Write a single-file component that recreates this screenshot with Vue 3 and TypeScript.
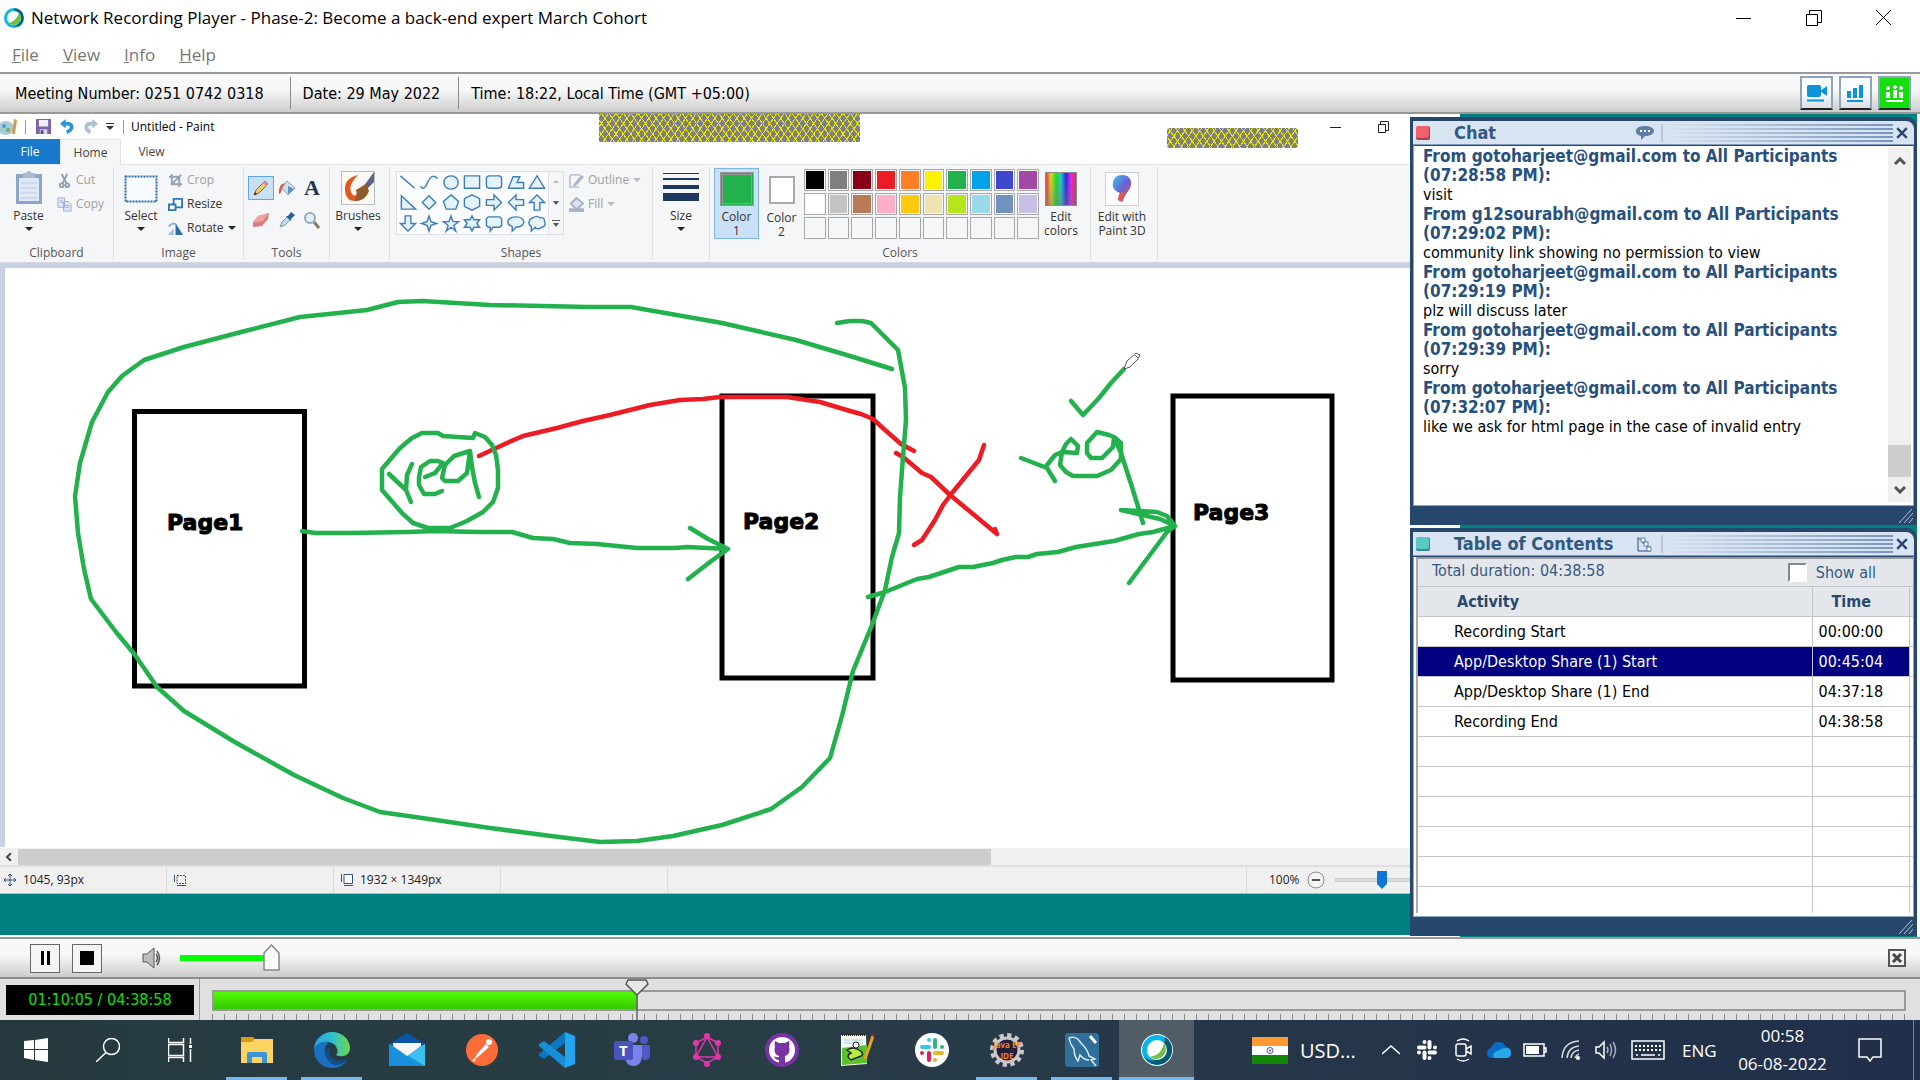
<script setup lang="ts">
import { ref } from 'vue'

interface ChatMessage { from: string; time: string; text: string }
interface TocRow { activity: string; time: string }

const messages: ChatMessage[] = [
  { from: 'gotoharjeet@gmail.com', time: '07:28:58 PM', text: 'visit' },
  { from: 'g12sourabh@gmail.com', time: '07:29:02 PM', text: 'community link showing no permission to view' },
  { from: 'gotoharjeet@gmail.com', time: '07:29:19 PM', text: 'plz will discuss later' },
  { from: 'gotoharjeet@gmail.com', time: '07:29:39 PM', text: 'sorry' },
  { from: 'gotoharjeet@gmail.com', time: '07:32:07 PM', text: 'like we ask for html page in the case of invalid entry' },
]

const rows: TocRow[] = [
  { activity: 'Recording Start', time: '00:00:00' },
  { activity: 'App/Desktop Share (1) Start', time: '00:45:04' },
  { activity: 'App/Desktop Share (1) End', time: '04:37:18' },
  { activity: 'Recording End', time: '04:38:58' },
]
const emptyRows = 6
const selected = ref(1)

const menus = ['File', 'View', 'Info', 'Help']

const palette = [
  '#000000', '#7f7f7f', '#880015', '#ed1c24', '#ff7f27', '#fff200', '#22b14c', '#00a2e8', '#3f48cc', '#a349a4',
  '#ffffff', '#c3c3c3', '#b97a57', '#ffaec9', '#ffc90e', '#efe4b0', '#b5e61d', '#99d9ea', '#7092be', '#c8bfe7',
  '', '', '', '', '', '', '', '', '', '',
]

const shapes = [
  'M2 3L17 16',
  'M1 14C4 19 7 14 9 9S15 1 19 6',
  'M10 3C20 3 20 17 10 17S0 3 10 3Z',
  'M2 3H18V16H2Z',
  'M5 3H15Q18 3 18 6V13Q18 16 15 16H5Q2 16 2 13V6Q2 3 5 3Z',
  'M2 16L7 4H14L11 10H18V16Z',
  'M10 3L18 16H2Z',
  'M3 3L18 17H3Z',
  'M10 3L17 10L10 17L3 10Z',
  'M10 2L18 9L15 17H5L2 9Z',
  'M10 2L18 6V14L10 18L2 14V6Z',
  'M2 7H10V2L18 10L10 18V13H2Z',
  'M18 7H10V2L2 10L10 18V13H18Z',
  'M7 18V10H2L10 2L18 10H13V18Z',
  'M7 2V10H2L10 18L18 10H13V2Z',
  'M10 2L12 8L18 10L12 12L10 18L8 12L2 10L8 8Z',
  'M10 2L12 8H18L13 12L15 18L10 14L5 18L7 12L2 8H8Z',
  'M10 2L12 6H18L15 10L18 14H12L10 18L8 14H2L5 10L2 6H8Z',
  'M4 3H16L18 5V12L16 14H9L6 18V14H4L2 12V5Z',
  'M10 3C21 3 21 14 10 14L6 18V13C-1 11 0 3 10 3Z',
  'M6 4Q10 1 13 4Q18 3 18 8Q20 13 15 14Q10 17 8 14L4 18V13Q0 10 2 8Q2 5 6 4Z',
]

const volume = ref(100)
const seek = ref(251)
</script>

<template>
  <div class="app">
    <header class="titlebar">
      <svg class="app-logo" viewBox="0 0 20 20"><circle cx="10" cy="10" r="10" fill="#07b9e6" /><path d="M17 3A10 10 0 0 1 3 17Q9 22 15 15Z" fill="#065a75" /><path d="M10 0A10 10 0 0 1 14 19Z" fill="#066484" /><circle cx="10" cy="10" r="7" fill="#fff" /><path d="M15 5A7 7 0 0 1 5 15Q12 13 15 5Z" fill="#6cc04a" /></svg>
      <h1>Network Recording Player - Phase-2: Become a back-end expert March Cohort</h1>
      <div class="win-controls">
        <button aria-label="Minimize"><svg viewBox="0 0 16 16"><path d="M0 8.500H15" /></svg></button>
        <button aria-label="Restore"><svg viewBox="0 0 16 16"><path d="M.5 4.500H11.500V15.500H.5ZM3.500 4V.5H15.500V12.500H12" /></svg></button>
        <button aria-label="Close"><svg viewBox="0 0 16 16"><path d="M0 0L15 15M15 0L0 15" /></svg></button>
      </div>
    </header>

    <nav class="menubar">
      <button v-for="m in menus" :key="m"><u>{{ m[0] }}</u>{{ m.slice(1) }}</button>
    </nav>

    <section class="infobar">
      <span>Meeting Number: 0251 0742 0318</span>
      <span>Date: 29 May 2022</span>
      <span>Time: 18:22, Local Time (GMT +05:00)</span>
      <div class="info-buttons">
        <button aria-label="Video"><svg viewBox="0 0 22 20"><rect x="1" y="2" width="14" height="12" rx="2" fill="#0b93dc" /><path d="M14 8L21 3V13Z" fill="#0b93dc" /><path d="M1 17.500H18" stroke="#0b93dc" stroke-width="2" /></svg></button>
        <button aria-label="Polling"><svg viewBox="0 0 22 20"><path d="M2 8H6V15H2ZM8 5H12V15H8ZM14 2H18V15H14ZM2 17H18V19H2Z" fill="#0b93dc" /></svg></button>
        <button class="on" aria-label="Participants"><svg viewBox="0 0 22 20"><path d="M2 9H6V15H2ZM9 7H13V15H9ZM15 9H19V15H15ZM2 17H19V19H2ZM2 4H6V6H2ZM3 3H5V7H3ZM9 3H13V5H9ZM10 2H12V6H10ZM15 4H19V6H15ZM16 3H18V7H16Z" fill="#fff" /></svg></button>
      </div>
    </section>

    <main class="stage">
      <section class="desktop">
        <div class="paint">
          <div class="paint-title">
            <svg class="paint-logo" viewBox="0 0 18 18"><ellipse cx="6" cy="10" rx="8" ry="7" fill="#a7cbd6" /><circle cx="4" cy="8" r="2" fill="#4c9fc7" /><circle cx="8" cy="12" r="2" fill="#6db05a" /><path d="M14 1L17 2L15 16H12Z" fill="#d79a45" /></svg>
            <i></i>
            <svg class="ic-save" viewBox="0 0 16 16"><path d="M0 0H16V16H0Z" fill="#7c63a8" /><path d="M3 1H13V8H3Z" fill="#f1eef7" /><path d="M4 11H12V16H4Z" fill="#ddd5ea" /><path d="M5 12H8V16H5Z" fill="#5b4586" /></svg>
            <svg class="ic-undo" viewBox="0 0 16 16"><path d="M4 5H8C14 5 14 12 7 14" fill="none" stroke="#2f93d8" stroke-width="4" /><path d="M0 5L6 0V10Z" fill="#2f93d8" /></svg>
            <svg class="ic-undo" viewBox="0 0 16 16"><path d="M12 5H8C2 5 2 12 8 14" fill="none" stroke="#adbfd3" stroke-width="4" /><path d="M16 5L10 0V10Z" fill="#adbfd3" /></svg>
            <svg class="ic-more" viewBox="0 0 8 8"><path d="M0 0H8V1H0ZM0 3H8L4 7Z" fill="#333" /></svg>
            <i></i>
            <span>Untitled - Paint</span>
            <div class="paint-win"><svg viewBox="0 0 60 14"><path d="M0 7.500H11" /><path d="M48.500 4.500H55.500V12.500H48.500ZM50.500 4V1.500H58.500V10.500H56" /></svg></div>
            <div class="hatch hatch-a"></div>
            <div class="hatch hatch-b"></div>
          </div>

          <div class="tabs">
            <button class="tab file">File</button>
            <button class="tab home">Home</button>
            <button class="tab view">View</button>
          </div>

          <div class="ribbon">
            <div class="group g-clip">
              <div class="body">
                <button class="big">
                  <svg class="big-ic" viewBox="0 0 34 34"><path d="M4 3H30V33H4Z" fill="#8ea4c6" /><path d="M7 7H27V30H7Z" fill="#dfe9f6" /><path d="M9 12H25M9 17H25M9 22H25M9 27H25" stroke="#b9cbe4" /><path d="M11 2H14Q17-2 20 2H23V7H11Z" fill="#a9b9d2" /></svg>
                  Paste<b></b>
                </button>
                <div class="smalls faded">
                  <button><svg viewBox="0 0 16 16"><path d="M5 1L10 11M11 1L6 11" stroke="#8f9cb5" stroke-width="2" /><circle cx="5" cy="13" r="2" fill="none" stroke="#8f9cb5" stroke-width="2" /><circle cx="11" cy="13" r="2" fill="none" stroke="#8f9cb5" stroke-width="2" /></svg>Cut</button>
                  <button><svg viewBox="0 0 16 16"><path d="M1 1H8V11H1ZM7 5H12L15 8V15H7Z" fill="#e2eaf5" stroke="#98acd0" /><path d="M3 4H6M3 6H6M9 9H13M9 11H13" stroke="#98acd0" /></svg>Copy</button>
                </div>
              </div>
              <p>Clipboard</p>
            </div>

            <div class="group g-image">
              <div class="body">
                <button class="big">
                  <svg class="big-ic" viewBox="0 0 34 34"><rect x="1.500" y="5.500" width="31" height="25" fill="#f6fafd" stroke="#2d6da8" stroke-width="2" stroke-dasharray="2 1" /></svg>
                  Select<b></b>
                </button>
                <div class="smalls">
                  <button class="faded"><svg viewBox="0 0 16 16"><path d="M4 1V12H15M1 4H12V15M5 11L14 2" fill="none" stroke="#93a1b8" stroke-width="2" /></svg>Crop</button>
                  <button><svg viewBox="0 0 16 16"><path d="M6 2H15V11H6Z" fill="#f2f8fc" stroke="#3477b5" stroke-width="2" /><path d="M1 8H8V14H1Z" fill="#fff" stroke="#3477b5" stroke-width="2" /></svg>Resize</button>
                  <button><svg viewBox="0 0 16 16"><path d="M8 15V2L16 15Z" fill="#2f6ea5" /><path d="M0 15L6 8V15Z" fill="#9fc0dc" /><path d="M1 6Q3 2 8 3" fill="none" stroke="#7fb0d8" stroke-width="2" /></svg>Rotate<b></b></button>
                </div>
              </div>
              <p>Image</p>
            </div>

            <div class="group g-tools">
              <div class="body">
                <div class="tools">
                  <button class="active" aria-label="Pencil"><svg viewBox="0 0 18 18"><path d="M2 16L4 11L13 2L16 5L7 14Z" fill="#efc96c" stroke="#8a6a3a" /><path d="M13 2L16 5L14 7L11 4Z" fill="#d98e88" /><path d="M2 16L3 13L5 15Z" fill="#222" /></svg></button>
                  <button aria-label="Fill"><svg viewBox="0 0 18 18"><path d="M9 2L17 9L10 16L4 9Z" fill="#cfe0f0" stroke="#7d9fc0" /><path d="M10 7L16 10L10 15Z" fill="#5d8fc0" /><path d="M7 4Q0 5 1 15Q4 14 4 9Z" fill="#d9603a" /></svg></button>
                  <button class="letter" aria-label="Text">A</button>
                  <button aria-label="Eraser"><svg viewBox="0 0 18 18"><path d="M6 5L17 2L16 8L10 15L1 16L1 11Z" fill="#dd7a80" /><path d="M6 5L17 2L11 10L1 12Z" fill="#efa4a6" /></svg></button>
                  <button aria-label="Color picker"><svg viewBox="0 0 18 18"><path d="M2 16L4 11L9 6L12 9L7 14Z" fill="#c3d9ec" stroke="#6f9cc0" /><path d="M8 5L10 5L13 1L17 4L13 8V10Z" fill="#22619e" /></svg></button>
                  <button aria-label="Magnifier"><svg viewBox="0 0 18 18"><path d="M11 11L16 17" stroke="#8a7a66" stroke-width="3" /><circle cx="7" cy="7" r="5" fill="#e4eff8" stroke="#98a8ba" stroke-width="2" /></svg></button>
                </div>
              </div>
              <p>Tools</p>
            </div>

            <div class="group g-brush">
              <div class="body">
                <button class="big">
                  <svg class="big-ic" viewBox="0 0 34 34"><rect x=".5" y=".5" width="33" height="33" fill="#fbf7f3" stroke="#b9bdc4" /><path d="M17 4Q3 7 4 20Q5 31 16 30Q23 28 22 22L17 21Q15 27 11 23Q6 15 17 4Z" fill="#dd5a20" /><path d="M33 1L22 16L25 19L33 11Z" fill="#5d6584" /><path d="M25 13L15 19Q17 26 13 30Q25 30 28 20Z" fill="#8e5b2c" /></svg>
                  Brushes<b></b>
                </button>
              </div>
            </div>

            <div class="group g-shapes">
              <div class="body">
                <div class="gallery">
                  <div class="shape-grid">
                    <svg v-for="(d, i) in shapes" :key="i" viewBox="0 0 20 20"><path :d="d" :fill="i < 2 ? 'none' : '#e4f2fa'" stroke="#3f7fb8" stroke-width="1.500" /></svg>
                  </div>
                  <div class="gallery-nav">
                    <svg viewBox="0 0 8 8"><path d="M1 5L4 2L7 5Z" fill="#bbb" /></svg>
                    <svg viewBox="0 0 8 8"><path d="M1 2H7L4 6Z" fill="#555" /></svg>
                    <svg viewBox="0 0 8 8"><path d="M0 0H8V1H0ZM1 3H7L4 7Z" fill="#555" /></svg>
                  </div>
                </div>
                <div class="smalls faded">
                  <button><svg viewBox="0 0 16 16"><path d="M1 2H12M1 2V15H11" fill="none" stroke="#c0c7d6" stroke-width="2" /><path d="M4 13L13 2L16 4L7 14Z" fill="#a8b4cc" /></svg>Outline<b></b></button>
                  <button><svg viewBox="0 0 16 16"><path d="M0 12H16V16H0Z" fill="#a8b3cc" /><path d="M8 1L15 7L8 13L2 7Z" fill="#dbe3f0" stroke="#a3b1cc" stroke-width="2" /></svg>Fill<b></b></button>
                </div>
              </div>
              <p>Shapes</p>
            </div>

            <div class="group g-size">
              <div class="body">
                <button class="big">
                  <svg class="big-ic wide" viewBox="0 0 36 34"><path d="M0 2H36V3H0ZM0 7H36V9H0ZM0 14H36V18H0ZM0 22H36V30H0Z" fill="#1b365f" /></svg>
                  Size<b></b>
                </button>
              </div>
            </div>

            <div class="group g-colors">
              <div class="body">
                <button class="color current"><span class="swatch green"></span>Color<br />1</button>
                <button class="color"><span class="swatch white"></span>Color<br />2</button>
                <div class="palette">
                  <button v-for="(c, i) in palette" :key="i" :aria-label="'Color ' + (i + 1)" :style="{ background: c || '#f5f6f7' }"></button>
                </div>
                <button class="color edit"><span class="swatch rainbow"></span>Edit<br />colors</button>
              </div>
              <p>Colors</p>
            </div>

            <div class="group g-3d">
              <div class="body">
                <button class="color edit">
                  <svg class="swatch" viewBox="0 0 34 34"><defs><linearGradient id="drop" x1="0" y1="0" x2="1" y2="1"><stop offset="0" stop-color="#36c5ea" /><stop offset=".5" stop-color="#6a63d8" /><stop offset="1" stop-color="#e8443c" /></linearGradient></defs><rect x=".5" y=".5" width="33" height="33" fill="#fdfdfe" stroke="#cdd1d6" /><path d="M17 3C24 3 27 8 26 13C25 19 20 21 18 29Q14 30 13 27L15 21C10 19 7 16 8 11Q9 3 17 3Z" fill="url(#drop)" /><path d="M14 22L21 18Q17 24 17 30L13 28Z" fill="#e9573f" /></svg>
                  Edit with<br />Paint 3D
                </button>
              </div>
            </div>
          </div>

          <div class="canvas">
            <svg viewBox="5 268 1405 579" preserveAspectRatio="xMinYMin meet">
              <g fill="none" stroke="#000" stroke-width="5">
                <path d="M134.500 411.500H304.500V686H134.500Z" /><path d="M722 396H873V678H722Z" /><path d="M1173 396H1332V680H1173Z" />
              </g>
              <g class="page-label">
                <text x="167" y="530">Page1</text><text x="743" y="529">Page2</text><text x="1193" y="520">Page3</text>
              </g>
              <g fill="none" stroke="#ed1c24" stroke-width="4.500" stroke-linecap="round" stroke-linejoin="round">
                <path d="M479 456L507 443L523 436L557 428L583 421L610 415L650 405L680 400L703 399L720 397H787L820 402L850 411L861 414L873 419L885 430L901 444L914 451" />
                <path d="M896 453L903 457L922 473L931 477L950 495L973 514L997 534L995 529" /><path d="M984 445L979 460L952 493L943 505L935 520L922 540L914 545" />
              </g>
              <g fill="none" stroke="#22b14c" stroke-width="4.500" stroke-linecap="round" stroke-linejoin="round">
                <path d="M892 369L850 356L796 340L722 323L631 307L588 307L490 305L422 301L398 302L367 310L300 317L245 331L184 347L144 360L122 376L108 392L92 422L80 463L75 496L78 533L84 569L91 599L116 632L135 655L157 687L184 711L233 741L294 775L343 798L380 812L429 819L490 828L551 836L600 842L637 841L673 836L722 825L771 809L802 787L830 758L842 716L853 671L872 625L885 590L892 557L899 533L900 497L903 457L906 420L905 388L898 350L885 337L871 323L862 321H850L837 323" />
                <path d="M422 433H438L443 436L473 438L475 433L485 437L492 445L496 455L498 470V488L493 502L483 512L467 521L450 528H428L413 523L402 513L382 490V469L400 448L412 438Z" />
                <path d="M389 474L406 490L411 502M412 464L407 475L406 490M425 477L435 473L443 463L438 461H430L421 467L419 477V485L424 494H435L442 491M470 451L454 456L445 465L442 478L445 481H458L467 473L470 451L472 467L475 483L479 497" />
                <path d="M302 531L315 533H350L408 532L435 531L477 532H512L533 538L553 539L570 543L597 544L637 548H675L687 547L728 549M690 528L708 539L728 549L710 562L688 579" />
                <path d="M868 597L885 592L917 579L929 577L959 567H973L993 563L1002 560L1016 557H1028L1037 554L1058 552L1076 547L1114 541L1139 534L1153 532L1175 526M1121 510L1157 512L1167 516L1175 526L1160 519L1121 510M1175 526L1167 532L1129 583" />
                <path d="M1071 401L1083 415L1099 398L1111 383L1124 369" />
                <path d="M1021 458L1047 468L1055 481M1047 465L1055 455L1062 452L1077 453L1078 446L1071 439L1066 444L1062 452L1060 465L1066 472L1073 476H1097L1111 470L1121 459V443L1114 437L1109 435L1097 432L1087 443V453L1091 458H1102L1113 447L1114 437L1121 453L1132 487L1143 523" />
              </g>
              <path d="M1124 369L1127 361L1136 353L1140 355L1138 359L1130 367ZM1135 355L1138 358" fill="#fff" stroke="#555" />
            </svg>
          </div>

          <div class="hscroll"><svg viewBox="0 0 8 8"><path d="M6 0L2 4L6 8" fill="none" stroke="#444" stroke-width="2" /></svg><div class="hthumb"></div></div>

          <div class="status">
            <span><svg viewBox="0 0 14 14"><path d="M7 1V13M1 7H13M5 3L7 1L9 3M5 11L7 13L9 11M3 5L1 7L3 9M11 5L13 7L11 9" fill="none" stroke="#34507c" /></svg>1045, 93px</span>
            <span><svg viewBox="0 0 14 14"><path d="M4 2.500H12.500V10.500H4Z" fill="none" stroke="#34507c" stroke-dasharray="2 1" /><path d="M1.500 2V9M4 12.500H13" stroke="#34507c" /></svg></span>
            <span><svg viewBox="0 0 14 14"><path d="M4 1.500H12.500V10.500H4Z" fill="#fff" stroke="#34507c" /><path d="M1.500 1V9M4 12.500H13" stroke="#34507c" /></svg>1932 × 1349px</span>
            <span></span>
            <span class="grow"></span>
            <div class="zoom">100%<svg viewBox="0 0 18 18"><circle cx="9" cy="9" r="8" fill="#f5f5f5" stroke="#888" /><path d="M5 9H13" stroke="#555" stroke-width="2" /></svg><div class="zoom-track"><svg viewBox="0 0 10 18"><path d="M0 0H10V13L5 18L0 13Z" fill="#0b78d7" /></svg></div></div>
          </div>
        </div>
        <div class="wallpaper"></div>
      </section>

      <aside class="panels">
        <section class="panel">
          <header class="panel-head">
            <i class="led red"></i><h2>Chat</h2>
            <svg class="bubble" viewBox="0 0 20 16"><path d="M10 1C22 1 22 11 10 11L6 15V11C-2 9-1 1 10 1Z" fill="#5d7fa6" /><path d="M5 6H7M9 6H11M13 6H15" stroke="#fff" stroke-width="2" /></svg>
            <div class="grip"></div>
            <button aria-label="Close chat"><svg viewBox="0 0 10 10"><path d="M1 1L9 9M9 1L1 9" stroke="#27486c" stroke-width="2" /></svg></button>
          </header>
          <div class="panel-body chat">
            <div class="log">
              <div v-for="(m, i) in messages" :key="i" class="msg">
                <h3>From {{ m.from }} to All Participants ({{ m.time }}):</h3>
                <p>{{ m.text }}</p>
              </div>
            </div>
            <div class="vscroll">
              <svg viewBox="0 0 12 8"><path d="M1 7L6 2L11 7" /></svg>
              <div class="vthumb"></div>
              <svg viewBox="0 0 12 8"><path d="M1 1L6 6L11 1" /></svg>
            </div>
          </div>
          <footer><svg viewBox="0 0 14 14"><path d="M0 14L13 0M5 14L14 4M10 14L14 9" /></svg></footer>
        </section>

        <section class="panel">
          <header class="panel-head">
            <i class="led teal"></i><h2>Table of Contents</h2>
            <svg class="tree" viewBox="0 0 16 16"><path d="M2 1V15M2 15H15M2 3H7M7 3V7H11V11H14V14" fill="none" stroke="#5d7fa6" stroke-width="1.500" /><path d="M5 2H9V6H5ZM8 6H12V10H8ZM11 11H15V15H11Z" fill="#fff" stroke="#5d7fa6" /></svg>
            <div class="grip"></div>
            <button aria-label="Close contents"><svg viewBox="0 0 10 10"><path d="M1 1L9 9M9 1L1 9" stroke="#27486c" stroke-width="2" /></svg></button>
          </header>
          <div class="panel-body toc">
            <div class="summary">
              <span>Total duration: 04:38:58</span>
              <label for="show-all"><input id="show-all" type="checkbox" />Show all</label>
            </div>
            <table>
              <colgroup><col /><col class="c-time" /><col class="c-end" /></colgroup>
              <thead><tr><th>Activity</th><th class="time">Time</th><th></th></tr></thead>
              <tbody>
                <tr v-for="(r, i) in rows" :key="i" :class="{ selected: selected === i }" @click="selected = i"><td>{{ r.activity }}</td><td>{{ r.time }}</td><td></td></tr>
                <tr v-for="n in emptyRows" :key="'e' + n"><td></td><td></td><td></td></tr>
              </tbody>
            </table>
          </div>
          <footer><svg viewBox="0 0 14 14"><path d="M0 14L13 0M5 14L14 4M10 14L14 9" /></svg></footer>
        </section>
      </aside>
    </main>

    <section class="controls">
      <button class="ctl" aria-label="Pause"><svg viewBox="0 0 14 14"><path d="M3 0H6V14H3ZM9 0H12V14H9Z" /></svg></button>
      <button class="ctl" aria-label="Stop"><svg viewBox="0 0 14 14"><path d="M0 0H14V14H0Z" /></svg></button>
      <svg class="speaker" viewBox="0 0 22 22"><path d="M1 7H5L12 1V21L5 15H1Z" fill="#bdbdbd" stroke="#555" /><path d="M14 7Q17 11 14 15M15 4Q20 11 15 18" fill="none" stroke="#555" stroke-width="1.500" /></svg>
      <input v-model="volume" class="volume" type="range" min="0" max="100" aria-label="Volume" />
      <button class="hide" aria-label="Hide controls"><svg viewBox="0 0 18 18"><path d="M1 1H17V17H1Z" fill="#f2f2f2" stroke="#555" stroke-width="2" /><path d="M5 5L13 13M13 5L5 13" stroke="#444" stroke-width="3" /></svg></button>
    </section>

    <section class="timeline">
      <div class="clock-box">01:10:05 / 04:38:58</div>
      <div class="seek">
        <div class="seek-track"><div class="seek-fill" :style="{ width: seek / 10 + '%' }"></div></div>
        <div class="ticks"></div>
        <input v-model="seek" type="range" min="0" max="1000" aria-label="Seek" />
      </div>
    </section>

    <footer class="taskbar">
      <button class="sys" aria-label="Start"><svg viewBox="0 0 24 24"><path d="M0 3L10 2V11H0ZM11 2L24 0V11H11ZM0 12H10V22L0 20ZM11 12H24V24L11 22Z" fill="#fff" /></svg></button>
      <button class="sys" aria-label="Search"><svg viewBox="0 0 24 24"><circle cx="15.500" cy="8.500" r="8" fill="none" stroke="#fff" stroke-width="1.500" /><path d="M10 14.500L0 24" stroke="#fff" stroke-width="1.500" /></svg></button>
      <button class="sys" aria-label="Task view"><svg viewBox="0 0 24 24"><path d="M.5 0V4.500H15.500V0M.5 6.500H15.500V17.500H.5ZM.5 24V19.500H15.500V24M22.500 0V6M22.500 11V24" fill="none" stroke="#fff" stroke-width="1.500" /><path d="M21 7H24V10H21Z" fill="#fff" /></svg></button>
      <div class="apps">
        <button class="open" aria-label="File Explorer"><svg viewBox="0 0 36 36"><path d="M2 5H14L17 8V14H2Z" fill="#d99a10" /><path d="M2 10H13L16 7H34V31H2Z" fill="#fcd462" /><path d="M8 31V22Q8 20 10 20H26Q28 20 28 22V31H23V25H13V31Z" fill="#3b93d8" /></svg></button>
        <button class="open" aria-label="Edge"><svg viewBox="0 0 36 36"><defs><linearGradient id="eg" x1="0" y1="0" x2="1" y2="0"><stop offset="0" stop-color="#27a3e2" /><stop offset=".5" stop-color="#2cc0d0" /><stop offset="1" stop-color="#6fd64a" /></linearGradient></defs><path d="M0 18C0 7 9 0 18 0C29 0 36 8 36 16C36 24 27 26 22 23C25 21 24 12 15 10C8 9 2 12 0 18Z" fill="url(#eg)" /><path d="M0 18C2 12 8 9 15 10C10 14 9 22 15 29C20 34 27 33 33 28C29 34 24 36 18 36C8 36 0 28 0 18Z" fill="#1b6fc0" /><path d="M15 14C11 19 11 26 17 31C23 35 30 32 33 27C27 30 18 29 15 22Z" fill="#124d8c" /></svg></button>
        <button aria-label="Mail"><svg viewBox="0 0 36 36"><path d="M0 12L18 1L36 12V18H0Z" fill="#0a55a8" /><path d="M0 12L18 23L36 12V34H0Z" fill="#3cc0f0" /><path d="M0 12L36 34H0Z" fill="#1a90dc" /><path d="M4 11H32V14L18 24L4 14Z" fill="#f7f7f7" /></svg></button>
        <button aria-label="Postman"><svg viewBox="0 0 36 36"><circle cx="18" cy="18" r="16" fill="#ff6c37" /><circle cx="25" cy="10" r="3" fill="#fff" /><path d="M22 12L25 15L15 24L10 28L13 22Z" fill="#fff" /><path d="M11 27L9 29" stroke="#fff" stroke-width="2" /></svg></button>
        <button aria-label="Visual Studio Code"><svg viewBox="0 0 36 36"><path d="M26 0L36 4V32L26 36L21 31L26 27V9L21 5Z" fill="#23a5f1" /><path d="M26 0V11L5 27L0 24V22Z" fill="#0b77c2" /><path d="M26 36V25L5 9L0 12V14Z" fill="#178fd8" /></svg></button>
        <button aria-label="Teams"><svg viewBox="0 0 36 36"><circle cx="30" cy="8" r="4" fill="#5059c9" /><circle cx="19" cy="6" r="5" fill="#7b83eb" /><path d="M26 13H36V24Q35 29 29 28Z" fill="#5059c9" /><path d="M11 13H28V25Q27 34 19 34Q12 33 11 26Z" fill="#7b83eb" /><rect x="0" y="9" width="19" height="19" rx="2" fill="#4b53bc" /><text x="5" y="24" fill="#fff" font-size="15" font-weight="700">T</text></svg></button>
        <button aria-label="GraphQL"><svg viewBox="0 0 36 36"><path d="M18 5L29 11V25L18 31L7 25V11ZM18 5L29 25H7Z" fill="none" stroke="#e535ab" stroke-width="1.500" /><g fill="#e535ab"><circle cx="18" cy="4" r="3" /><circle cx="29" cy="11" r="3" /><circle cx="29" cy="25" r="3" /><circle cx="18" cy="32" r="3" /><circle cx="7" cy="25" r="3" /><circle cx="7" cy="11" r="3" /></g></svg></button>
        <button aria-label="GitHub Desktop"><svg viewBox="0 0 36 36"><circle cx="18" cy="18" r="17" fill="#7a33a6" /><circle cx="18" cy="18" r="13" fill="#fff" /><path d="M11 9L15 11H21L25 9Q26 12 25 14Q27 22 21 24V31H15V28Q11 28 10 24Q13 26 15 25V24Q9 22 11 14Q10 12 11 9Z" fill="#7a33a6" /></svg></button>
        <button aria-label="Notepad++"><svg viewBox="0 0 36 36"><path d="M2 3H27L28 32L2 34Z" fill="#f5f8f0" /><path d="M3 16L28 13V31L3 33Z" fill="#59c22c" /><path d="M3 3H27" stroke="#222" stroke-width="2" stroke-dasharray="1 1" /><path d="M5 8H24M5 11H24" stroke="#a9cce6" /><path d="M8 18Q14 14 20 18T22 24L12 28Q6 24 12 21Z" fill="#b9ef3c" stroke="#223" stroke-width="1.500" /><circle cx="17" cy="13" r="3" fill="#fff" stroke="#222" /><path d="M26 27L34 4" stroke="#e8a21c" stroke-width="3" /><path d="M34 2L35 5" stroke="#9a2c20" stroke-width="2" /></svg></button>
        <button aria-label="Slack"><svg viewBox="0 0 36 36"><circle cx="18" cy="18" r="17" fill="#fff" /><g fill="none" stroke-width="4" stroke-linecap="round"><path d="M15 8V8.100M8 15H15" stroke="#36c5f0" /><path d="M21 8V15M28 15V15.100" stroke="#2eb67d" /><path d="M21 21H28M21 28V28.100" stroke="#ecb22e" /><path d="M15 21V28M8 21V21.100" stroke="#e01e5a" /></g></svg></button>
        <button class="open" aria-label="Java EE IDE"><svg viewBox="0 0 36 36"><circle cx="18" cy="18" r="14" fill="none" stroke="#c9c9c9" stroke-width="6" stroke-dasharray="4 3.300" /><circle cx="18" cy="18" r="12" fill="#241f38" stroke="#c9c9c9" stroke-width="3" /><text x="18" y="16" fill="#f58220" font-size="8" font-weight="700" text-anchor="middle">Java EE</text><text x="18" y="27" fill="#f58220" font-size="8" font-weight="700" text-anchor="middle">IDE</text></svg></button>
        <button class="open" aria-label="MySQL Workbench"><svg viewBox="0 0 36 36"><rect x="1" y="1" width="34" height="34" rx="3" fill="#2f6f99" /><path d="M5 6Q12 3 17 11Q24 18 25 24L31 27L27 28L32 34M5 6Q6 12 10 17Q10 24 14 29L16 23Q20 28 25 28" fill="none" stroke="#dce9f2" stroke-width="1.500" /><path d="M26 4L32 11" stroke="#fff" stroke-width="3" /></svg></button>
        <button class="open current" aria-label="Webex"><svg viewBox="0 0 36 36"><circle cx="18" cy="18" r="16" fill="#fff" /><circle cx="18" cy="18" r="15" fill="#08b7e8" /><path d="M26 5A15 15 0 1 1 5 25Q18 34 24 20Z" fill="#055a78" /><circle cx="18" cy="18" r="10" fill="#fff" /><path d="M25 11A10 10 0 0 1 11 25Q23 23 25 11Z" fill="#6cc04a" /></svg></button>
      </div>

      <div class="tray">
        <svg class="flag" viewBox="0 0 36 27"><path d="M0 0H36V9H0Z" fill="#ff9933" /><path d="M0 9H36V18H0Z" fill="#fff" /><path d="M0 18H36V27H0Z" fill="#138808" /><circle cx="18" cy="13.500" r="3" fill="none" stroke="#4a4ab0" /><circle cx="18" cy="13.500" r="1" fill="#4a4ab0" /></svg>
        <span class="rate">USD...</span>
        <svg class="t-chev" viewBox="0 0 18 10"><path d="M0 9L9 1L18 9" fill="none" stroke="#fff" stroke-width="1.500" /></svg>
        <svg class="t-24" viewBox="0 0 24 24"><g fill="none" stroke="#fff" stroke-width="4" stroke-linecap="round"><path d="M9.500 4V4.100M4 9.500H9.500M14.500 4V9.500M20 9.500V9.600M14.500 14.500H20M14.500 20V20.100M9.500 14.500V20M4 14.500V14.600" /></g></svg>
        <svg class="t-24" viewBox="0 0 24 24"><path d="M5 8Q5 6 7 6H13Q15 6 15 8V16Q15 18 13 18H7Q5 18 5 16ZM15 11L20 8V16L15 13M6 3Q12-1 18 3M6 21Q12 25 18 21" fill="none" stroke="#fff" stroke-width="1.500" /></svg>
        <svg class="t-24" viewBox="0 0 24 24"><path d="M5 20Q0 20 0 15Q0 11 4 10Q6 4 12 4Q17 4 19 9Q24 10 24 15Q24 20 19 20Z" fill="#0a6cc7" /><path d="M8 20Q4 18 8 14L17 10Q24 9 24 15Q24 20 19 20Z" fill="#28a8ea" /></svg>
        <svg class="t-24" viewBox="0 0 24 24"><path d="M1 6H21V18H1ZM21 10H23V14H21" fill="none" stroke="#fff" stroke-width="1.500" /><path d="M3 8H16V16H3Z" fill="#fff" /></svg>
        <svg class="t-24" viewBox="0 0 24 24"><path d="M3 20Q4 4 20 3M8 20Q9 9 20 8M12 20Q13 13 20 12M16 20Q17 17 20 16" fill="none" stroke="#d5dade" stroke-width="1.500" /><circle cx="19" cy="20" r="2" fill="#fff" /></svg>
        <svg class="t-24" viewBox="0 0 24 24"><path d="M1 9H4L9 4V20L4 15H1Z" fill="none" stroke="#fff" stroke-width="1.500" /><path d="M12 9Q14 12 12 15M15 6Q18 12 15 18M18 4Q23 12 18 20" fill="none" stroke="#a5afba" stroke-width="1.500" /></svg>
        <svg class="t-kbd" viewBox="0 0 34 20"><path d="M1 1H33V19H1Z" fill="none" stroke="#fff" stroke-width="1.500" /><path d="M4 6H30M4 10H30" stroke="#fff" stroke-width="2" stroke-dasharray="2 2" /><path d="M5 15H7M10 15H24M27 15H29" stroke="#fff" stroke-width="1.500" /></svg>
        <span class="lang">ENG</span>
        <div class="clock"><span>00:58</span><span>06-08-2022</span></div>
        <svg class="t-note" viewBox="0 0 24 24"><path d="M1 1H23V19H15L12 23L9 19H1Z" fill="none" stroke="#fff" stroke-width="1.500" /></svg>
        <i class="peek"></i>
      </div>
    </footer>
  </div>
</template>

<style>
body { margin: 0; }
</style>

<style scoped>
* { box-sizing: border-box; }
.app { display: flex; flex-direction: column; min-height: 100vh; background: #fff; color: #000; font-family: "Open Sans", "Noto Sans", sans-serif; overflow: hidden; }
button { padding: 0; border: 0; background: none; color: inherit; font: inherit; }
h1, h2, h3, p { margin: 0; font-weight: 400; }
svg { flex: none; display: block; }

.titlebar { display: flex; align-items: center; height: 36px; padding-left: 4px; }
.app-logo { width: 20px; height: 20px; margin-right: 7px; }
.titlebar h1 { font-size: 17px; line-height: 24px; white-space: nowrap; }
.win-controls { display: flex; margin-left: auto; padding-right: 1px; }
.win-controls button { display: grid; place-items: center; width: 70px; height: 34px; }
.win-controls svg { width: 16px; height: 16px; fill: none; stroke: #000; }

.menubar { display: flex; gap: 24px; height: 36px; padding-left: 12px; color: #777; font-size: 17px; }

.infobar { display: flex; align-items: center; height: 42px; border-top: 2px solid #999; border-bottom: 2px solid #999; background: linear-gradient(#f8f8f8 40%, #cdcdcd); font-family: "DejaVu Sans Condensed", "DejaVu Sans", sans-serif; font-size: 16px; }
.infobar > span { height: 32px; padding: 0 26px 0 12px; line-height: 34px; border-right: 1px solid #8c8c8c; white-space: nowrap; }
.infobar > span:first-child { padding-left: 15px; }
.infobar > span + span { padding-right: 18px; }
.infobar > span:nth-child(3) { border: 0; }
.info-buttons { display: flex; gap: 6px; margin-left: auto; padding-right: 9px; }
.info-buttons button { display: grid; place-items: center; width: 33px; height: 34px; border: 2px solid #8ea3bc; border-bottom: 2px solid #222; background: linear-gradient(#fafbff 50%, #dcdde4); }
.info-buttons .on { background: #14de0b; }
.info-buttons svg { width: 22px; height: 20px; }

.stage { display: flex; flex: 1; }
.desktop { display: flex; flex: 1; flex-direction: column; min-width: 0; padding-bottom: 2px; overflow: hidden; }
.wallpaper { height: 42px; border-top: 1px solid #8cc; background: #008080; }
.paint { display: flex; flex: 1; flex-direction: column; color: #333; font-size: 12px; line-height: 14px; }

.paint-title { position: relative; display: flex; align-items: center; height: 25px; }
.paint-title i { width: 1px; height: 14px; background: #999; }
.paint-logo { width: 18px; height: 18px; margin-right: 7px; }
.ic-save { width: 15px; height: 15px; margin: 0 9px 0 10px; }
.ic-undo { width: 15px; height: 15px; margin-right: 8px; }
.ic-more { width: 8px; height: 8px; margin-right: 9px; }
.paint-title span { margin-left: 7px; color: #000; }
.paint-win { margin-left: auto; padding-right: 20px; }
.paint-win svg { width: 60px; height: 14px; fill: none; stroke: #222; stroke-width: 1px; }
.hatch { position: absolute; background-color: #807f80; background-image: repeating-linear-gradient(55deg, #e8e800 0 1px, transparent 1px 6px), repeating-linear-gradient(-55deg, #e8e800 0 1px, transparent 1px 6px); }
.hatch-a { top: 0; left: 599px; width: 261px; height: 28px; }
.hatch-b { top: 14px; left: 1167px; width: 131px; height: 20px; border-radius: 3px; }

.tabs { display: flex; height: 26px; border-bottom: 1px solid #e1e3e6; }
.tab { width: 61px; height: 25px; color: #444; }
.tab.file { width: 60px; background: #1979ca; color: #fff; }
.tab.home { height: 26px; border: 1px solid #e1e3e6; border-bottom: 0; background: #f5f6f7; }

.ribbon { display: flex; height: 98px; padding-top: 2px; border-bottom: 1px solid #d5d8dc; background: #f5f6f7; }
.group { display: flex; flex: none; flex-direction: column; height: 93px; border-right: 1px solid #e0e2e5; }
.group .body { display: flex; flex: 1; min-height: 0; padding-top: 4px; }
.group p { height: 14px; color: #555; text-align: center; }
.g-clip { width: 114px; }
.g-image { width: 130px; }
.g-tools { width: 86px; }
.g-brush { width: 60px; }
.g-shapes { width: 263px; }
.g-size { width: 57px; }
.g-colors { width: 381px; }
.g-3d { width: 67px; }
.big { display: flex; flex-direction: column; align-items: center; width: 58px; height: 66px; }
.g-clip .big { width: 57px; }
.g-image .big { width: 54px; }
.big-ic { width: 34px; height: 34px; margin-bottom: 4px; }
.big-ic.wide { width: 36px; }
.group b { border: 4px solid transparent; border-top-color: #222; border-bottom: 0; }
.big b { margin-top: 4px; }
.g-brush .big, .g-size .big { width: 56px; }
.smalls { display: flex; flex-direction: column; margin-top: -3px; }
.smalls button { display: flex; align-items: center; gap: 4px; height: 24px; }
.smalls svg { width: 15px; height: 15px; }
.faded { color: #a0a0a0; }
.smalls.faded b { border-top-color: #bbb; }
.tools { display: grid; grid-template-columns: 26px 26px 24px; grid-template-rows: 24px 24px; row-gap: 8px; padding: 5px 0 0 4px; }
.tools button { display: grid; place-items: center; }
.tools svg { width: 18px; height: 18px; }
.tools .active { border: 1px solid #5fa8e8; background: #c9e0f7; }
.tools .letter { color: #1f3557; font: 700 22px/24px "Liberation Serif", serif; }
.gallery { display: flex; width: 168px; height: 64px; margin: 0 5px 0 6px; border: 1px solid #dcdfe3; background: #fbfcfd; }
.shape-grid { display: grid; flex: 1; grid-template-columns: repeat(7, 1fr); grid-template-rows: repeat(3, 1fr); place-items: center; }
.shape-grid svg { width: 20px; height: 19px; }
.gallery-nav { display: flex; flex-direction: column; align-items: center; justify-content: space-around; width: 15px; border-left: 1px solid #e1e3e6; background: #f5f6f7; }
.gallery-nav svg { width: 8px; height: 8px; }
.color { width: 45px; height: 71px; margin-top: -3px; text-align: center; }
.color.current { margin-left: 4px; border: 1px solid #7eb4ea; background: #c9e0f7; }
.swatch { display: block; width: 34px; height: 34px; margin: 3px auto 4px; border: 1px solid #8c8c8c; }
.swatch.green { border: 3px double #999; background: #22b14c; }
.swatch.white { width: 26px; height: 28px; margin: 7px auto; border: 2px solid #aaa; background: #fff; }
.swatch.rainbow { width: 32px; background: linear-gradient(transparent, #7777), linear-gradient(90deg, #e33, #dd2, #2d2, #2cc, #22e, #e2e, #e24); }
svg.swatch { border: 0; }
.palette { display: grid; grid-template-columns: repeat(10, 1fr); grid-auto-rows: 22px; gap: 2px; width: 235px; height: 70px; margin: -2px 0 0 0; }
.palette button { border: 1px solid #a8a8a8; box-shadow: inset 0 0 0 1px #f5f6f7; }
.edit { width: 44px; }
.g-3d .edit { width: 62px; }

.canvas { flex: 1; min-height: 0; padding: 5px 0 0 5px; background: #c8d1e2; }
.canvas svg { width: 100%; height: 100%; background: #fff; }
.page-label { font: 700 22px "DejaVu Sans", sans-serif; stroke: #000; stroke-width: 1px; }

.hscroll { display: flex; align-items: center; height: 18px; background: #f0f0f0; border-top: 1px solid #fff; }
.hscroll svg { width: 8px; height: 8px; margin: 0 5px; }
.hthumb { width: 69%; height: 16px; background: #cdcdcd; }
.status { display: flex; height: 28px; border-top: 2px solid #e0e0e0; background: #f0f0f0; font-size: 12px; color: #222; }
.status span { display: flex; align-items: center; gap: 6px; width: 167px; padding-left: 6px; border-right: 1px solid #dcdcdc; }
.status span:first-child { padding-left: 3px; }
.status .grow { flex: 1; }
.status svg { width: 14px; height: 14px; }
.zoom { display: flex; align-items: center; gap: 7px; width: 163px; padding-left: 22px; }
.zoom > svg { width: 18px; height: 18px; }
.zoom-track { flex: 1; height: 4px; margin-left: 3px; border: 1px solid #ccc; background: #ddd; }
.zoom-track svg { width: 10px; height: 18px; margin: -8px 0 0 41px; }

.panels { display: flex; flex: none; flex-direction: column; gap: 3px; width: 510px; padding: 3px 3px 1px 0; background: linear-gradient(90deg, #fff 50px, #008080 50px 507px, #fff 507px); font-family: "DejaVu Sans Condensed", "DejaVu Sans", sans-serif; font-size: 16px; }
.panel { display: flex; flex: 1 1 0; flex-direction: column; min-height: 0; padding: 4px 3px 0; border-top-right-radius: 10px; background: #27486c; }
.panel-head { display: flex; align-items: center; height: 24px; padding: 0 6px 0 3px; border-bottom: 1px solid #7f9cc0; border-top-right-radius: 8px; background: #d9e4f2; }
.led { width: 14px; height: 14px; margin-right: 24px; border-radius: 2px; box-shadow: inset -1px -2px 1px #0005; }
.led.red { background: #f0616e; }
.led.teal { background: #5cc8c8; }
.panel-head h2 { color: #33587f; font-size: 18px; font-weight: 700; line-height: 22px; white-space: nowrap; }
.bubble { width: 20px; height: 16px; margin-left: auto; margin-right: 6px; }
.tree { width: 16px; height: 16px; margin-left: auto; margin-right: 9px; }
.grip { width: 232px; height: 18px; border-left: 2px solid #b8c8dc; background: linear-gradient(90deg, #d9e4f2, transparent), repeating-linear-gradient(#7795bb 0 2px, #d9e4f2 2px 4px); }
.panel-head button { width: 12px; margin-left: 3px; }
.panel-head button svg { width: 12px; height: 12px; }
.panel-body { flex: 1; min-height: 0; border: 1px solid #8fa6c3; border-top: 1px solid #27486c; background: #fff; }
.panel footer { display: flex; align-items: center; justify-content: flex-end; height: 19px; padding-right: 1px; }
.panel footer svg { width: 14px; height: 14px; fill: none; stroke: #b5c6da; stroke-width: 1px; }
.chat { display: flex; }
.log { flex: 1; padding: 1px 40px 0 9px; }
.msg h3 { color: #27507d; font-size: 17px; font-weight: 700; line-height: 19px; }
.msg p { line-height: 20px; white-space: nowrap; }
.vscroll { display: flex; flex-direction: column; justify-content: space-between; align-items: center; width: 23px; padding: 10px 0 8px; margin: 1px 2px 3px 0; background: #f0f0f0; }
.vscroll svg { width: 12px; height: 8px; fill: none; stroke: #555; stroke-width: 3px; }
.vthumb { width: 23px; height: 32px; margin: auto 0 9px; background: #cdcdcd; }
.toc { padding: 0 0 3px 2px; }
.summary { display: flex; align-items: center; justify-content: space-between; height: 29px; padding: 0 37px 0 14px; border-top: 2px solid #999; border-left: 2px solid #aaa; background: #e3e7ec; color: #33587f; }
.summary span { padding-bottom: 5px; }
.summary label { display: flex; align-items: center; gap: 9px; }
.summary input { appearance: none; width: 19px; height: 19px; margin: 0; border: 2px solid; border-color: #888 #fff #fff #888; background: #fff; }
table { width: 100%; table-layout: fixed; border-collapse: collapse; border-left: 2px solid #aaa; }
.c-time { width: 97px; }
.c-end { width: 4px; }
th { height: 30px; padding: 0 0 0 39px; border: 1px solid #c3c6ca; background: #e3e7ec; color: #27486c; font-weight: 700; text-align: left; }
th.time { padding-left: 19px; }
td { height: 30px; padding: 0 0 0 36px; border: 1px solid #c3c6ca; line-height: 20px; }
td + td { padding-left: 6px; }
td:last-child, th:last-child { padding: 0; }
tr > :last-child { border-right: 0; }
tbody tr:last-child td { height: 26px; border-bottom: 0; }
.selected td { background: #000080; color: #fff; }
.selected td:last-child { background: #fff; }

.controls { display: flex; align-items: center; height: 42px; padding: 0 14px 0 30px; border-top: 2px solid #999; border-bottom: 2px solid #8c8c8c; background: linear-gradient(#f8f8f8 40%, #cdcdcd); }
.ctl { display: grid; place-items: center; width: 30px; height: 29px; margin-right: 12px; border: 1px solid #666; background: #f4f4f4; }
.ctl svg { width: 14px; height: 14px; }
.speaker { width: 22px; height: 22px; margin: 0 16px 0 28px; }
.volume { appearance: none; width: 100px; height: 28px; margin: 0; background: linear-gradient(#0f0, #0f0) 0 11px / 84px 6px no-repeat; }
.volume::-webkit-slider-thumb { appearance: none; width: 17px; height: 28px; background: url("data:image/svg+xml,%3Csvg xmlns='http://www.w3.org/2000/svg' width='17' height='28'%3E%3Cpath d='M8.500 1L16 9V26H1V9Z' fill='%23fafafa' stroke='%23888' stroke-width='1.500'/%3E%3C/svg%3E") no-repeat; }
.hide { margin-left: auto; }
.hide svg { width: 18px; height: 18px; }

.timeline { display: flex; height: 41px; padding: 0 14px 0 6px; background: #e0e0e0; }
.clock-box { width: 188px; height: 30px; margin: 6px 5px 0 0; background: #000; color: #0be00b; font-family: "DejaVu Sans Condensed", "DejaVu Sans", sans-serif; font-size: 16px; line-height: 30px; text-align: center; white-space: nowrap; }
.seek { position: relative; flex: 1; padding: 11px 0 0 12px; border-left: 1px solid #999; }
.seek-track { height: 21px; border: 2px solid #999; }
.seek-fill { height: 100%; background: linear-gradient(#52fb00, #37c800); }
.ticks { height: 6px; margin-top: 3px; background: repeating-linear-gradient(90deg, #888 0 1px, transparent 1px 12px); }
.seek input { position: absolute; top: 0; left: 0; appearance: none; width: calc(100% + 12px); height: 41px; margin: 0; background: none; }
.seek input::-webkit-slider-thumb { appearance: none; width: 24px; height: 41px; background: url("data:image/svg+xml,%3Csvg xmlns='http://www.w3.org/2000/svg' width='24' height='41'%3E%3Cpath d='M12 16V41' stroke='%23666' stroke-width='1.500'/%3E%3Cpath d='M3 1H21L23 5L12 16L1 5Z' fill='%23e8e8e8' stroke='%23555' stroke-width='1.500'/%3E%3C/svg%3E") no-repeat; }

.taskbar { display: flex; height: 60px; background: linear-gradient(90deg, #25393f, #293d46 40%, #24344a 75%, #212f4a); color: #fff; font-size: 17px; }
.sys { display: grid; place-items: center; width: 72px; }
.sys svg { width: 24px; height: 24px; }
.apps { display: flex; margin-left: 3px; }
.apps button { display: grid; place-items: center; width: 75px; position: relative; }
.apps svg { width: 36px; height: 36px; overflow: visible; font-family: "Open Sans", sans-serif; }
.apps .open::after { content: ""; position: absolute; right: 7px; bottom: 0; left: 7px; height: 3px; background: #76b9ed; }
.apps .current { background: #505d67; }
.apps .current::after { right: 0; left: 0; }
.tray { display: flex; align-items: center; margin-left: auto; }
.flag { width: 36px; height: 27px; margin-right: 12px; }
.rate { width: 82px; font-size: 20px; }
.t-chev { width: 18px; height: 10px; margin-right: 15px; }
.t-24 { width: 24px; height: 24px; margin-right: 12px; }
.t-kbd { width: 34px; height: 20px; margin-right: 17px; }
.lang { width: 54px; }
.clock { display: flex; flex-direction: column; align-items: center; width: 93px; margin-right: 29px; line-height: 28px; }
.t-note { width: 24px; height: 24px; margin-right: 31px; }
.peek { width: 1px; height: 60px; margin-right: 6px; background: #7b8594; }
</style>
